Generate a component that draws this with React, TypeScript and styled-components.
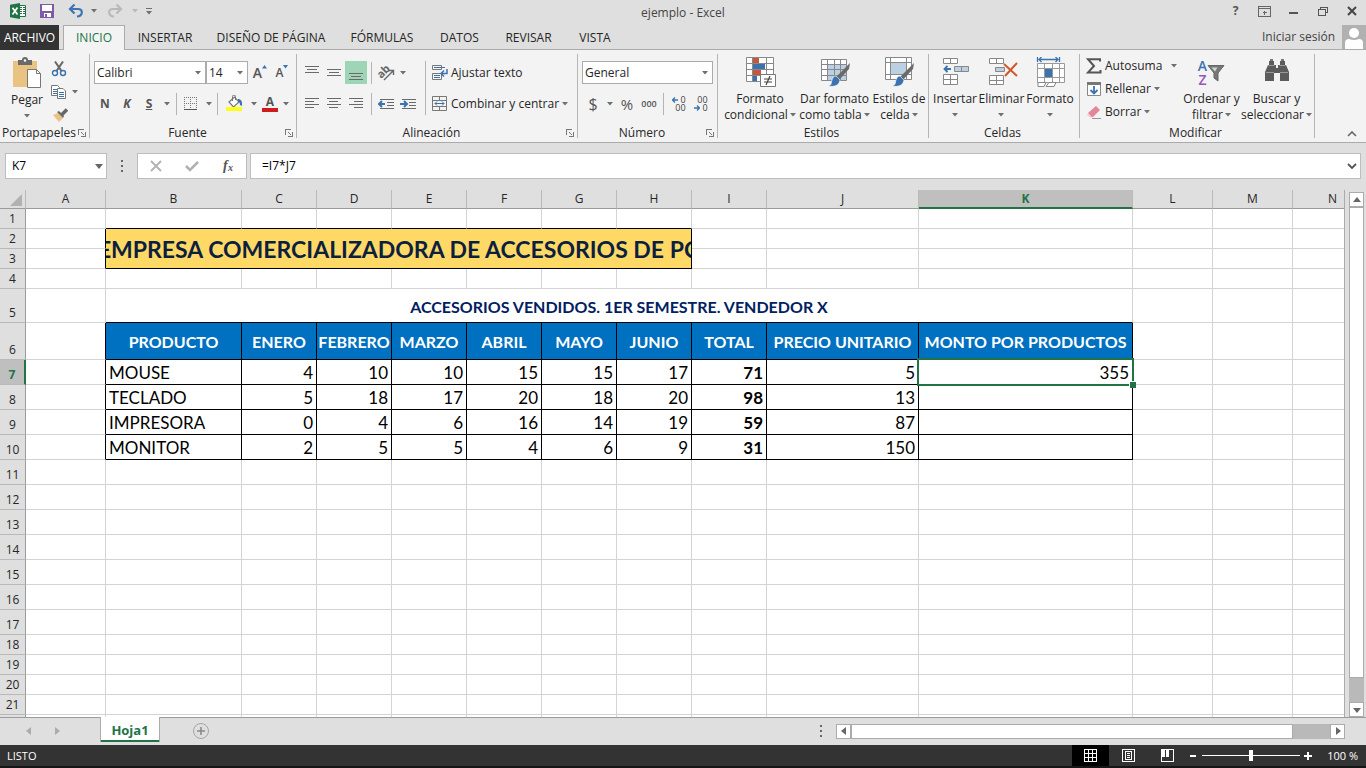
import React from "react";
import styled, { createGlobalStyle, css } from "styled-components";

const GREEN = "#217346";
const INK = "#262626";
const LINE = "#ababab";
const CHROME = "#dfdfdf";
const RIBBON = "#f3f3f3";
const GREY = "#6f6f6f";
const BLUE = "#3b73af";

const Global = createGlobalStyle`
  * { box-sizing: border-box; }
  body { margin: 0; background: ${CHROME}; color: ${INK}; font: 12px/16px "Open Sans", sans-serif; }
  button, input, select { font: inherit; color: inherit; }
  svg { display: block; flex: none; }
`;

const Window = styled.div`
  display: flex;
  flex-direction: column;
  height: 100vh;
  overflow: hidden;
`;

const PlainButton = styled.button`
  display: flex;
  align-items: center;
  justify-content: center;
  padding: 0;
  border: 0;
  background: transparent;
  white-space: nowrap;
`;

/* ---------- Title bar ---------- */

const TitleBar = styled.header`
  display: grid;
  grid-template-columns: 1fr auto 1fr;
  align-items: center;
  height: 25px;
  color: #444;
`;

const QuickAccess = styled.div`
  display: flex;
  align-items: center;
  padding: 0 0 3px 3px;
`;

const WindowButtons = styled.div`
  display: flex;
  justify-content: flex-end;
  padding-bottom: 3px;
`;

const BarButton = styled(PlainButton)<{ $w: number }>`
  width: ${(p) => p.$w}px;
  height: 22px;
`;

const Title = styled.h1`
  margin: 0;
  font-size: 12px;
  font-weight: 400;
`;

/* ---------- Ribbon tabs ---------- */

const TabRow = styled.nav`
  display: flex;
  height: 25px;
  box-shadow: inset 0 -1px 0 ${LINE};
`;

const FileTab = styled(PlainButton)`
  width: 59px;
  margin-right: 4px;
  background: #333;
  color: #fff;
`;

const Tab = styled(PlainButton)<{ $w: number; $active?: boolean }>`
  width: ${(p) => p.$w}px;
  ${(p) =>
    p.$active &&
    css`
      background: ${RIBBON};
      color: ${GREEN};
      border: 1px solid ${LINE};
      border-bottom: 0;
    `}
`;

const Account = styled.a`
  display: flex;
  align-items: center;
  gap: 7px;
  height: 24px;
  margin-left: auto;
  color: #444;
  text-decoration: none;
`;

/* ---------- Ribbon ---------- */

const Ribbon = styled.section`
  display: flex;
  height: 93px;
  padding: 4px 0;
  background: ${RIBBON};
  border-bottom: 1px solid ${LINE};
`;

const Group = styled.div<{ $w: number }>`
  display: flex;
  flex-direction: column;
  width: ${(p) => p.$w}px;
  border-right: 1px solid #b5b5b5;
`;

const GroupBody = styled.div<{ $left?: number; $top?: number }>`
  display: flex;
  flex: 1;
  min-height: 0;
  padding: ${(p) => p.$top ?? 0}px 0 0 ${(p) => p.$left ?? 0}px;
`;

const GroupFooter = styled.div`
  display: flex;
  align-items: center;
  height: 10px;
  padding-right: 3px;
  line-height: 10px;
`;

const GroupName = styled.span`
  flex: 1;
  text-align: center;
  white-space: nowrap;
`;

const Column = styled.div<{ $gap?: number }>`
  display: flex;
  flex-direction: column;
  gap: ${(p) => p.$gap ?? 0}px;
`;

const Line = styled.div<{ $gap?: number; $h?: number }>`
  display: flex;
  align-items: center;
  gap: ${(p) => p.$gap ?? 0}px;
  height: ${(p) => p.$h ?? 23}px;
`;

const Tool = styled(PlainButton)<{ $w: number; $on?: boolean; $left?: boolean }>`
  width: ${(p) => p.$w}px;
  height: 23px;
  gap: 3px;
  justify-content: ${(p) => (p.$left ? "flex-start" : "center")};
  background: ${(p) => (p.$on ? "#9fd5b7" : "transparent")};
`;

const Glyph = styled.span<{ $size?: number; $weight?: number; $italic?: boolean; $line?: boolean }>`
  color: #555;
  font-size: ${(p) => p.$size ?? 12}px;
  font-weight: ${(p) => p.$weight ?? 700};
  font-style: ${(p) => (p.$italic ? "italic" : "normal")};
  text-decoration: ${(p) => (p.$line ? "underline" : "none")};
`;

const Rule = styled.span<{ $h?: number; $gap?: number }>`
  width: 1px;
  height: ${(p) => p.$h ?? 22}px;
  margin: 0 ${(p) => p.$gap ?? 0}px;
  background: #b5b5b5;
`;

const ComboBox = styled.label<{ $w: number }>`
  display: grid;
  align-items: center;
  width: ${(p) => p.$w}px;
  height: 23px;
  background: #fff;
  border: 1px solid ${LINE};
  > * { grid-area: 1 / 1; }
  > svg { justify-self: end; margin-right: 4px; pointer-events: none; }
`;

const Select = styled.select`
  width: 100%;
  height: 100%;
  padding: 0 12px 0 2px;
  border: 0;
  background: transparent;
  appearance: none;
`;

const BigTool = styled(PlainButton)<{ $w: number }>`
  flex-direction: column;
  justify-content: flex-start;
  width: ${(p) => p.$w}px;
  gap: 3px;
`;

const BigLabel = styled.span`
  display: flex;
  flex-direction: column;
  align-items: center;
`;

const BigLabelLine = styled.span`
  display: flex;
  align-items: center;
  gap: 2px;
  height: 16px;
`;

const Collapse = styled(PlainButton)`
  align-self: flex-end;
  width: 16px;
  height: 8px;
  margin: 0 6px 0 auto;
`;

/* ---------- Formula bar ---------- */

const FormulaRow = styled.div`
  display: flex;
  height: 47px;
  padding: 10px 5px 11px;
`;

const Field = styled.label<{ $w?: number }>`
  display: flex;
  align-items: center;
  flex: ${(p) => (p.$w ? "none" : 1)};
  width: ${(p) => (p.$w ? `${p.$w}px` : "auto")};
  padding: 0 3px 0 6px;
  background: #fff;
  border: 1px solid #bdbdbd;
`;

const TextInput = styled.input<{ $indent?: number }>`
  flex: 1;
  min-width: 0;
  padding: 0 0 0 ${(p) => p.$indent ?? 0}px;
  border: 0;
  background: transparent;
  color: #000;
`;

const Grip = styled.span`
  display: flex;
  align-items: center;
  justify-content: center;
  width: 30px;
`;

const FormulaButtons = styled.div`
  display: flex;
  align-items: center;
  width: 110px;
  margin-right: 3px;
  background: #fff;
  border: 1px solid #bdbdbd;
`;

/* ---------- Worksheet ---------- */

const Workspace = styled.main`
  display: flex;
  flex: 1;
  min-height: 0;
`;

const Viewport = styled.div`
  flex: 1;
  min-width: 0;
  overflow: hidden;
  background: linear-gradient(#fff, #fff) 0 19px no-repeat;
  border-right: 1px solid ${LINE};
`;

const Sheet = styled.table`
  width: 100%;
  table-layout: fixed;
  border-collapse: separate;
  border-spacing: 0;
`;

const Col = styled.col<{ $w: number }>`
  width: ${(p) => p.$w}px;
`;

const Row = styled.tr<{ $h: number }>`
  height: ${(p) => p.$h}px;
`;

const ColumnHead = styled.th<{ $active?: boolean }>`
  height: 19px;
  padding: 0;
  font-weight: ${(p) => (p.$active ? 700 : 400)};
  line-height: 16px;
  color: ${(p) => (p.$active ? GREEN : INK)};
  background: ${(p) => (p.$active ? "#bfbfbf" : CHROME)};
  border-right: 1px solid #b9b9b9;
  border-bottom: 1px solid #9b9b9b;
  ${(p) => p.$active && `border-bottom: 2px solid ${GREEN};`}
`;

const Corner = styled.td`
  padding: 2px 0 0 10px;
  background: ${CHROME};
  border-right: 1px solid #b9b9b9;
  border-bottom: 1px solid #9b9b9b;
`;

const RowHead = styled.th<{ $active?: boolean }>`
  padding: 0;
  vertical-align: bottom;
  line-height: 18px;
  font-weight: ${(p) => (p.$active ? 700 : 400)};
  color: ${(p) => (p.$active ? GREEN : INK)};
  background: ${(p) => (p.$active ? "#bfbfbf" : CHROME)};
  border-right: ${(p) => (p.$active ? `2px solid ${GREEN}` : "1px solid #9b9b9b")};
  border-bottom: 1px solid #b9b9b9;
`;

type CellKind = "blank" | "banner" | "caption" | "head" | "text" | "number" | "total";

const Cell = styled.td<{ $kind: CellKind; $right?: boolean; $bottom?: boolean }>`
  padding: 2px 3px 0;
  background: #fff;
  color: #000;
  font: 400 17px/22px Lato, sans-serif;
  white-space: nowrap;
  border-right: 1px solid ${(p) => (p.$right ? "#000" : "#d4d4d4")};
  border-bottom: 1px solid ${(p) => (p.$bottom ? "#000" : "#d4d4d4")};
  text-align: ${(p) => (p.$kind === "number" || p.$kind === "total" ? "right" : p.$kind === "text" ? "left" : "center")};
  ${(p) => p.$kind === "blank" && "padding: 0; line-height: 16px;"}
  ${(p) => p.$kind === "total" && "font-weight: 700;"}
  ${(p) => p.$kind === "head" && "background: #0070c0; color: #fff; font-size: 16px; font-weight: 700; padding: 2px 0 0;"}
  ${(p) => p.$kind === "caption" && "color: #002060; font-size: 16px; font-weight: 700;"}
  ${(p) => p.$kind === "banner" && "background: #ffd966; padding: 0;"}
`;

const Banner = styled.div`
  display: flex;
  justify-content: center;
  overflow: hidden;
  color: #0d1f3f;
  font-size: 23px;
  font-weight: 700;
  line-height: 38px;
`;

const Selected = styled(Cell)`
  position: relative;
  &::before {
    content: "";
    position: absolute;
    inset: -2px;
    border: 2px solid ${GREEN};
  }
  &::after {
    content: "";
    position: absolute;
    right: -4px;
    bottom: -4px;
    width: 6px;
    height: 6px;
    background: ${GREEN};
    border: solid #fff;
    border-width: 1px 0 0 1px;
  }
`;

const VScroll = styled.div`
  display: flex;
  flex-direction: column;
  width: 15px;
  margin: 2px 2px 0 4px;
  background: #b9b9b9;
`;

const ScrollButton = styled(PlainButton)`
  width: 15px;
  height: 15px;
  background: #fff;
  border: 1px solid ${LINE};
`;

const VThumb = styled.div`
  flex: 0 0 471px;
  background: #fff;
  border: 1px solid ${LINE};
`;

const Spacer = styled.div`
  flex: 1;
`;

/* ---------- Sheet tabs and status bar ---------- */

const SheetBar = styled.div`
  display: flex;
  height: 28px;
  padding-right: 21px;
  box-shadow: inset 0 1px 0 #9b9b9b;
`;

const SheetNav = styled.div`
  display: flex;
  align-items: center;
  width: 100px;
  padding-left: 15px;
`;

const SheetTab = styled(PlainButton)`
  width: 60px;
  height: 25px;
  background: #fff;
  color: ${GREEN};
  font-size: 13px;
  font-weight: 700;
  border: solid ${LINE};
  border-width: 0 1px;
  box-shadow: inset 0 -2px 0 ${GREEN};
`;

const AddSheet = styled(PlainButton)`
  width: 82px;
`;

const HScroll = styled.div`
  display: flex;
  align-self: center;
  width: 509px;
  height: 15px;
  background: #b9b9b9;
`;

const HThumb = styled.div`
  width: 442px;
  background: #fff;
  border: 1px solid ${LINE};
`;

const StatusBar = styled.footer`
  display: flex;
  align-items: center;
  height: 23px;
  padding: 0 8px 0 7px;
  background: #333;
  border-bottom: 2px solid #161616;
  color: #fff;
  font-size: 11px;
`;

const ViewButton = styled(PlainButton)<{ $w: number; $on?: boolean }>`
  width: ${(p) => p.$w}px;
  height: 21px;
  background: ${(p) => (p.$on ? "#000" : "transparent")};
`;

const Zoom = styled.input`
  width: 98px;
  height: 12px;
  margin: 0 3px;
  appearance: none;
  background: linear-gradient(#fff, #fff) center / 100% 1px no-repeat;
  &::-webkit-slider-thumb {
    appearance: none;
    width: 4px;
    height: 11px;
    background: #fff;
  }
`;

const ZoomLevel = styled.span`
  width: 46px;
  text-align: right;
`;

/* ---------- Icons ---------- */

type IconProps = { w?: number; h?: number; children: React.ReactNode; smooth?: boolean };
const Icon = ({ w = 16, h = 16, children, smooth }: IconProps) => (
  <svg width={w} height={h} viewBox={`0 0 ${w} ${h}`} fill="none" aria-hidden="true" shapeRendering={smooth ? "auto" : "crispEdges"}>
    {children}
  </svg>
);

const Caret = ({ color = GREY }: { color?: string }) => (
  <Icon w={6} h={4} smooth>
    <path d="M0 0h6L3 3.5z" fill={color} />
  </Icon>
);

const ExcelIcon = () => (
  <Icon smooth>
    <path d="M9 2.5h6.5v11H9z" fill="#fff" stroke={GREEN} />
    <path d="M10 4.5h2M13 4.5h2M10 6.5h2M13 6.5h2M10 8.5h2M13 8.5h2M10 10.5h2M13 10.5h2" stroke={GREEN} strokeWidth="1.2" />
    <path d="M0 1.8 10 0v16L0 14.2z" fill={GREEN} />
    <path d="m2.5 4.7 5 6.8M7.5 4.5l-5 7" stroke="#fff" strokeWidth="1.7" />
  </Icon>
);

const SaveIcon = () => (
  <Icon w={14} h={14}>
    <path d="M0 0h14v14H0z" fill="#7d5ba6" />
    <path d="M2 1h10v6H2zM4 9h7v4H4z" fill="#fff" />
    <path d="M5 10h2v3H5z" fill="#7d5ba6" />
  </Icon>
);

const UndoIcon = ({ redo }: { redo?: boolean }) => (
  <Icon smooth>
    <g transform={redo ? "matrix(-1 0 0 1 16 0)" : undefined} stroke={redo ? "#b9b9b9" : "#3f74b3"} strokeWidth="2.2">
      <path d="M2 6h8c5.5 0 5 7-1 7.5" />
      <path d="M6.5 1.5 2 6l4.500 4.500" />
    </g>
  </Icon>
);

const PasteIcon = () => (
  <Icon w={32} h={32} smooth>
    <path d="M2 4h24v26H2z" fill="#eac282" />
    <path d="M7 3h4a3 3 0 0 1 6 0h4v5H7z" fill="#6a6a6a" />
    <circle cx="14" cy="3.5" r="1.2" fill="#fff" />
    <path d="M16.500 12.500h9l4 4v14h-13z" fill="#fff" stroke="#777" />
    <path d="M25.500 12.500v4h4" stroke="#777" />
  </Icon>
);

const CutIcon = () => (
  <Icon smooth>
    <path d="M4 .5 10.500 10M12 .5 5.500 10" stroke="#666" strokeWidth="2" />
    <circle cx="4" cy="12" r="2.5" stroke={BLUE} strokeWidth="1.4" />
    <circle cx="12" cy="12" r="2.5" stroke={BLUE} strokeWidth="1.4" />
  </Icon>
);

const CopyIcon = () => (
  <Icon smooth>
    <path d="M.5 1.500h6l2 2v8h-8z" fill="#fff" stroke="#777" />
    <path d="M2 5.500h4M2 7.500h4M2 9.500h4" stroke={BLUE} />
    <path d="M6.500 4.500h5.500l2.500 2.500v7.500h-8z" fill="#fff" stroke="#777" />
    <path d="M8 8.500h5M8 10.500h5M8 12.500h5" stroke={BLUE} />
  </Icon>
);

const PainterIcon = () => (
  <Icon smooth>
    <path d="m1 8 5-2 5 5-4 4z" fill="#eac282" />
    <path d="m5 5 2-1 5 5-1 2z" fill="#666" />
    <path d="M10 7.500 15 2.500" stroke="#666" strokeWidth="3.5" />
  </Icon>
);

const BordersIcon = () => (
  <Icon w={14} h={14}>
    <path d="M.5 0v13M6.500 0v13M12.500 0v13M0 .5h13M0 6.500h13" stroke="#777" strokeDasharray="1 1" />
    <path d="M0 12.500h13" stroke="#555" />
  </Icon>
);

const FillIcon = () => (
  <Icon w={17} h={17} smooth>
    <path d="m3 7 5.500-5 4.500 5-5.500 5z" fill="#fff" stroke="#777" strokeWidth="1.2" />
    <path d="M6.500 6V1.500a1.500 1.500 0 0 1 3 0V5" stroke="#777" />
    <path d="M12 4c3 0 4.500 2 4 7l-2-1c0-2-.5-3-2-3z" fill={BLUE} />
    <path d="M0 12h16v4H0z" fill="#ffff1a" />
  </Icon>
);

const FontColor = styled.span`
  width: 16px;
  height: 17px;
  border-bottom: 4px solid #cf1b1b;
  color: #555;
  font-weight: 700;
  line-height: 13px;
`;

const SizeMark = styled.span<{ $small?: boolean }>`
  display: flex;
  align-items: flex-start;
  color: #555;
  font-size: ${(p) => (p.$small ? 12 : 14)}px;
  font-weight: 600;
`;

type BarSpec = [number, number];
const Bars = ({ bars, y = 0 }: { bars: BarSpec[]; y?: number }) => (
  <Icon>
    {bars.map(([x, w], i) => (
      <path key={i} d={`M${x} ${y + i * 3 + 0.5}h${w}`} stroke="#6a6a6a" />
    ))}
  </Icon>
);

const IndentIcon = ({ inward }: { inward?: boolean }) => (
  <Icon>
    <path d="M2 3.500h14M9 6.500h7M9 9.500h7M2 12.500h14" stroke="#6a6a6a" />
    <path d={inward ? "M0 8h6M4 5l3 3-3 3" : "M7 8H1M4 5 1 8l3 3"} stroke={BLUE} strokeWidth="2" shapeRendering="auto" />
  </Icon>
);

const AngleIcon = () => (
  <Icon w={18} h={18} smooth>
    <g transform="rotate(-45 7 8)">
      <text x="0" y="11" fontSize="11" fontWeight="700" fill="#666">ab</text>
    </g>
    <path d="m7 16 9-9M12 6.500h4.500V11" stroke="#666" strokeWidth="1.4" />
  </Icon>
);

const WrapIcon = () => (
  <Icon smooth>
    <path d="M.5.5h9v4h-9zM.5 8.500h9v6h-9z" stroke="#777" />
    <path d="M2 2.500h11M2 10.500h6M2 12.500h6" stroke={BLUE} />
    <path d="M15 4v4.500H9M12 5.500l-3 3 3 3" stroke={BLUE} strokeWidth="1.5" />
  </Icon>
);

const MergeIcon = () => (
  <Icon smooth>
    <path d="M.5.5h14v14H.5zM.5 4.500h14M.5 10.500h14M7.500.5v4M7.500 10.500v4" stroke="#777" />
    <path d="M3 7.500h9M5 5.500l-2 2 2 2M10 5.500l2 2-2 2" stroke={BLUE} />
  </Icon>
);

const Zeros = styled.span<{ $less?: boolean }>`
  display: flex;
  flex-direction: column;
  align-items: ${(p) => (p.$less ? "flex-end" : "flex-end")};
  color: #444;
  font-size: 9px;
  line-height: 8px;
`;

const ZeroLine = styled.span`
  display: flex;
  align-items: center;
  gap: 2px;
`;

const DecimalIcon = ({ less }: { less?: boolean }) => {
  const arrow = (
    <Icon w={6} h={6} smooth>
      <path d={less ? "M0 3h5M3 .5 5.500 3 3 5.500" : "M6 3H1M3 .5.5 3 3 5.500"} stroke={BLUE} strokeWidth="1.3" />
    </Icon>
  );
  return (
    <Zeros>
      <ZeroLine>{less ? "00" : <>{arrow}0</>}</ZeroLine>
      <ZeroLine>{less ? <>{arrow}0</> : "00"}</ZeroLine>
    </Zeros>
  );
};

const ConditionalIcon = () => (
  <Icon w={32} h={31} smooth>
    <path d="M2.500.5h27v24h-27z" fill="#fff" />
    <path d="M9 0h6v6H9zM9 12h8v6H9z" fill="#c4573c" />
    <path d="M9 6h12v6H9zM9 18h4v6H9z" fill={BLUE} />
    <path d="M2.500.5h27v24h-27zM2 6.500h27M2 12.500h27M2 18.500h27M8.500 0v24M22.500 0v24" stroke="#888" />
    <path d="M16.500 17.500h15v12h-15z" fill="#fff" stroke="#777" />
    <path d="M20 22h8M20 25h8M26 19l-4 9" stroke="#444" strokeWidth="1.2" />
  </Icon>
);

const Brush = () => (
  <>
    <path d="m31 6-1 6-10 11-3-3z" fill="#6a6a6a" />
    <path d="m17 19 4 4c-1 6-6 7-12 6 4-1 3-3 4-6 1-3 2-4 4-4z" fill={BLUE} stroke="#fff" strokeWidth=".6" />
  </>
);

const TableFormatIcon = () => (
  <Icon w={32} h={31} smooth>
    <path d="M2.500 2.500h25v21h-25z" fill="#fff" />
    <path d="M9 8h18v15H9z" fill="#bcd0e4" />
    <path d="M2.500 2.500h25v21h-25zM2 7.500h25M2 12.500h25M2 18.500h25M8.500 2v21M15.500 2v21M21.500 2v21" stroke="#888" />
    <Brush />
  </Icon>
);

const CellStyleIcon = () => (
  <Icon w={32} h={31} smooth>
    <path d="M2.500.5h26v22h-26z" fill="#fff" />
    <path d="M8 6h15v11H8z" fill="#bcd0e4" />
    <path d="M2.500.5h26v22h-26zM2 5.500h26M2 17.500h26M7.500 0v22M23.500 0v22" stroke="#888" />
    <Brush />
  </Icon>
);

const InsertIcon = () => (
  <Icon w={32} h={31} smooth>
    <path d="M4.500 1.500h14v5h-14zM11.500 1.500v5M4.500 17.500h14v10h-14zM11.500 17.500v10M4.500 22.500h14" fill="#fff" stroke="#888" />
    <path d="M15.500 9.500h14v5h-14zM22.500 9.500v5" fill="#bcd0e4" stroke="#888" />
    <path d="M12 12H6M8.500 9 5.500 12l3 3" stroke={BLUE} strokeWidth="1.8" />
  </Icon>
);

const DeleteIcon = () => (
  <Icon w={32} h={31} smooth>
    <path d="M3.500 1.500h14v5h-14zM10.500 1.500v5M3.500 18.500h14v9h-14zM10.500 18.500v9M3.500 23.500h14" fill="#fff" stroke="#888" />
    <path d="M9.500 10.500h9v4h-9z" fill="#bcd0e4" stroke="#888" />
    <path d="m18 7 13 12M31 6 19 19" stroke="#d0582f" strokeWidth="2" />
  </Icon>
);

const FormatIcon = () => (
  <Icon w={32} h={31} smooth>
    <path d="M3.500 6.500h27v19h-27z" fill="#fff" />
    <path d="M11 12h7v8h-7z" fill={BLUE} />
    <path d="M3.500 6.500h27v19h-27zM3 11.500h27M3 20.500h27M10.500 6v19M18.500 6v19M25.500 6v19" stroke="#999" />
    <path d="M4 25.500h8l-2 4H4zM12 29.500l3-4h7l-2 4z" fill="#fff" stroke="#888" />
    <path d="M3.500 0v5M25.500 0v5M5 2.500h19M7.500 0 5 2.500 7.500 5M21.500 0 24 2.500 21.500 5" stroke={BLUE} strokeWidth="1.3" />
  </Icon>
);

const SigmaIcon = () => (
  <Icon smooth>
    <path d="M14 3.500V1.200H2L8 8l-6 6.500h12.500V12" stroke="#555" strokeWidth="2" />
  </Icon>
);

const FillDownIcon = () => (
  <Icon smooth>
    <path d="M1.500 1.500h13v13h-13z" fill="#fff" stroke="#888" />
    <path d="M1 1h14v3H1z" fill="#777" />
    <path d="M8 5v7M4.500 9 8 12.500 11.500 9" stroke={BLUE} strokeWidth="1.8" />
  </Icon>
);

const EraserIcon = () => (
  <Icon smooth>
    <path d="M2 9 10 2l4 4-7 7H4z" fill="#e5849a" />
    <path d="m2 9 4 4-1 1-4-3z" fill="#f7cdd6" />
    <path d="M6 14.500h9" stroke="#999" />
  </Icon>
);

const SortDrawing = styled.span`
  display: flex;
  align-items: center;
  height: 31px;
`;

const SortLetters = styled.span`
  display: flex;
  flex-direction: column;
  color: ${BLUE};
  font-size: 14px;
  font-weight: 600;
  line-height: 14px;
`;

const Purple = styled.span`
  color: #9455bd;
`;

const SortIcon = () => (
  <SortDrawing>
    <SortLetters>A<Purple>Z</Purple></SortLetters>
    <Icon w={18} h={18} smooth>
      <path d="M1 1.500h16L11 9v8l-4-3V9z" fill="#777" stroke="#666" />
      <path d="M4.500 3.500h6l-2.500 4z" fill="#d5d5d5" />
    </Icon>
  </SortDrawing>
);

const FindIcon = () => (
  <Icon w={32} h={31} smooth>
    <path d="M8 4h5v4h2v3h2V8h2V4h5v4h1l3 7v9h-9v-8h-6v8H4v-9l3-7h1z" fill="#5c5c5c" />
    <path d="M7.500 8.500h6M18.500 8.500h6M5 15.500h8M19 15.500h8" stroke="#999" />
    <path d="M9 2h3v2H9zM20 2h3v2h-3z" fill="#777" />
  </Icon>
);

const LauncherIcon = () => (
  <Icon w={8} h={8}>
    <path d="M.5 6V.5H6" stroke="#777" />
    <path d="m3 3 3 3M7.500 3v4.500H3" stroke="#777" />
  </Icon>
);

const Arrow = ({ dir, color = "#666" }: { dir: "up" | "down" | "left" | "right"; color?: string }) => {
  const shapes = { up: "M0 6h8L4 1z", down: "M0 2h8L4 7z", left: "M6 0v8L1 4z", right: "M2 0v8l5-4z" };
  return (
    <Icon w={8} h={8} smooth>
      <path d={shapes[dir]} fill={color} />
    </Icon>
  );
};

const Dots = () => (
  <Icon w={2} h={12}>
    <path d="M0 1h2M0 6h2M0 11h2" stroke="#666" strokeWidth="2" />
  </Icon>
);

/* ---------- Ribbon parts ---------- */

const Footer = ({ name, launcher }: { name: string; launcher?: boolean }) => (
  <GroupFooter>
    <GroupName>{name}</GroupName>
    {launcher && (
      <PlainButton aria-label={`Opciones de ${name}`}>
        <LauncherIcon />
      </PlainButton>
    )}
  </GroupFooter>
);

type BigProps = { w: number; icon: React.ReactNode; first: string; second?: string };
const Big = ({ w, icon, first, second }: BigProps) => (
  <BigTool $w={w}>
    {icon}
    <BigLabel>
      <BigLabelLine>{first}</BigLabelLine>
      <BigLabelLine>
        {second}
        <Caret />
      </BigLabelLine>
    </BigLabel>
  </BigTool>
);

const Combo = ({ w, label, value }: { w: number; label: string; value: string }) => (
  <ComboBox $w={w}>
    <Select aria-label={label} defaultValue={value}>
      <option>{value}</option>
    </Select>
    <Caret />
  </ComboBox>
);

const Drop = ({ label, w = 16 }: { label: string; w?: number }) => (
  <Tool $w={w} aria-label={label}>
    <Caret />
  </Tool>
);

const RibbonPanel = () => (
  <Ribbon>
    <Group $w={90}>
      <GroupBody $left={5} $top={3}>
        <BigTool $w={44}>
          <PasteIcon />
          <BigLabel>
            <BigLabelLine>Pegar</BigLabelLine>
            <BigLabelLine><Caret /></BigLabelLine>
          </BigLabel>
        </BigTool>
        <Column>
          <Tool $w={20} aria-label="Cortar"><CutIcon /></Tool>
          <Line>
            <Tool $w={20} aria-label="Copiar"><CopyIcon /></Tool>
            <Drop label="Opciones de copiar" w={12} />
          </Line>
          <Tool $w={22} aria-label="Copiar formato"><PainterIcon /></Tool>
        </Column>
      </GroupBody>
      <Footer name="Portapapeles" launcher />
    </Group>

    <Group $w={207}>
      <GroupBody $left={4} $top={7}>
        <Column $gap={8}>
          <Line>
            <Combo w={112} label="Fuente" value="Calibri" />
            <Combo w={42} label="Tamaño de fuente" value="14" />
            <Tool $w={24} aria-label="Aumentar tamaño">
              <SizeMark>A<Icon w={5} h={4} smooth><path d="M0 3.500h5L2.500 0z" fill={BLUE} /></Icon></SizeMark>
            </Tool>
            <Tool $w={20} aria-label="Disminuir tamaño">
              <SizeMark $small>A<Icon w={5} h={4} smooth><path d="M0 0h5L2.500 3.500z" fill={BLUE} /></Icon></SizeMark>
            </Tool>
          </Line>
          <Line>
            <Tool $w={22}><Glyph>N</Glyph></Tool>
            <Tool $w={22}><Glyph $italic>K</Glyph></Tool>
            <Tool $w={22}><Glyph $line>S</Glyph></Tool>
            <Drop label="Subrayado" w={14} />
            <Rule $gap={2} />
            <Tool $w={24} aria-label="Bordes"><BordersIcon /></Tool>
            <Drop label="Opciones de bordes" w={12} />
            <Rule $gap={2} />
            <Tool $w={28} aria-label="Color de relleno"><FillIcon /></Tool>
            <Drop label="Opciones de relleno" w={12} />
            <Tool $w={20} aria-label="Color de fuente"><FontColor>A</FontColor></Tool>
            <Drop label="Opciones de color" w={12} />
          </Line>
        </Column>
      </GroupBody>
      <Footer name="Fuente" launcher />
    </Group>

    <Group $w={281}>
      <GroupBody $left={4} $top={7}>
        <Column $gap={8}>
          <Line>
            <Tool $w={22} aria-label="Alinear arriba"><Bars y={1} bars={[[1, 14], [3, 10], [1, 14]]} /></Tool>
            <Tool $w={22} aria-label="Alinear al medio"><Bars y={4} bars={[[1, 14], [3, 10], [1, 14]]} /></Tool>
            <Tool $w={22} $on aria-label="Alinear abajo"><Bars y={8} bars={[[1, 14], [3, 10], [1, 14]]} /></Tool>
            <Tool $w={8} as="span"><Rule /></Tool>
            <Tool $w={22} aria-label="Orientación"><AngleIcon /></Tool>
            <Drop label="Opciones de orientación" w={12} />
          </Line>
          <Line>
            <Tool $w={22} aria-label="Alinear a la izquierda"><Bars y={2} bars={[[1, 14], [1, 9], [1, 14], [1, 9]]} /></Tool>
            <Tool $w={22} aria-label="Centrar"><Bars y={2} bars={[[1, 14], [3, 9], [1, 14], [3, 9]]} /></Tool>
            <Tool $w={22} aria-label="Alinear a la derecha"><Bars y={2} bars={[[1, 14], [6, 9], [1, 14], [6, 9]]} /></Tool>
            <Tool $w={8} as="span"><Rule /></Tool>
            <Tool $w={22} aria-label="Disminuir sangría"><IndentIcon /></Tool>
            <Tool $w={22} aria-label="Aumentar sangría"><IndentIcon inward /></Tool>
          </Line>
        </Column>
        <Line $h={54}><Tool $w={13} as="span"><Rule $h={54} /></Tool></Line>
        <Column $gap={8}>
          <Tool $w={104} $left><WrapIcon />Ajustar texto</Tool>
          <Line>
            <Tool $w={126} $left><MergeIcon />Combinar y centrar</Tool>
            <Drop label="Opciones de combinar" w={14} />
          </Line>
        </Column>
      </GroupBody>
      <Footer name="Alineación" launcher />
    </Group>

    <Group $w={140}>
      <GroupBody $left={4} $top={7}>
        <Column $gap={8}>
          <Combo w={131} label="Formato de número" value="General" />
          <Line>
            <Tool $w={22}><Glyph $size={16} $weight={400}>$</Glyph></Tool>
            <Drop label="Formatos de moneda" w={12} />
            <Tool $w={22}><Glyph $size={15} $weight={400}>%</Glyph></Tool>
            <Tool $w={22}><Glyph $size={9} $weight={600}>000</Glyph></Tool>
            <Rule $gap={3} />
            <Tool $w={24} aria-label="Aumentar decimales"><DecimalIcon /></Tool>
            <Tool $w={20} aria-label="Disminuir decimales"><DecimalIcon less /></Tool>
          </Line>
        </Column>
      </GroupBody>
      <Footer name="Número" launcher />
    </Group>

    <Group $w={211}>
      <GroupBody $left={4} $top={3}>
        <Big w={76} icon={<ConditionalIcon />} first="Formato" second="condicional" />
        <Big w={73} icon={<TableFormatIcon />} first="Dar formato" second="como tabla" />
        <Big w={56} icon={<CellStyleIcon />} first="Estilos de" second="celda" />
      </GroupBody>
      <Footer name="Estilos" />
    </Group>

    <Group $w={151}>
      <GroupBody $left={3} $top={3}>
        <Big w={46} icon={<InsertIcon />} first="Insertar" />
        <Big w={47} icon={<DeleteIcon />} first="Eliminar" />
        <Big w={50} icon={<FormatIcon />} first="Formato" />
      </GroupBody>
      <Footer name="Celdas" />
    </Group>

    <Group $w={235}>
      <GroupBody $left={6}>
        <Column>
          <Line>
            <Tool $w={80} $left><SigmaIcon />Autosuma</Tool>
            <Drop label="Opciones de autosuma" />
          </Line>
          <Tool $w={72} $left><FillDownIcon />Rellenar<Caret /></Tool>
          <Tool $w={72} $left><EraserIcon />Borrar<Caret /></Tool>
        </Column>
        <GroupBody $left={1} $top={3}>
          <Big w={57} icon={<SortIcon />} first="Ordenar y" second="filtrar" />
          <Big w={73} icon={<FindIcon />} first="Buscar y" second="seleccionar" />
        </GroupBody>
      </GroupBody>
      <Footer name="Modificar" />
    </Group>

    <Collapse aria-label="Contraer la cinta de opciones">
      <Icon w={10} h={6} smooth><path d="m1 5 4-4 4 4" stroke="#666" strokeWidth="1.6" /></Icon>
    </Collapse>
  </Ribbon>
);

/* ---------- Worksheet data ---------- */

const columns: [string, number][] = [
  ["A", 80], ["B", 136], ["C", 75], ["D", 75], ["E", 75], ["F", 75], ["G", 75], ["H", 75],
  ["I", 75], ["J", 152], ["K", 214], ["L", 80], ["M", 80], ["N", 80],
];

const headings = ["PRODUCTO", "ENERO", "FEBRERO", "MARZO", "ABRIL", "MAYO", "JUNIO", "TOTAL", "PRECIO UNITARIO", "MONTO POR PRODUCTOS"];

const sales: [string, ...number[]][] = [
  ["MOUSE", 4, 10, 10, 15, 15, 17, 71, 5],
  ["TECLADO", 5, 18, 17, 20, 18, 20, 98, 13],
  ["IMPRESORA", 0, 4, 6, 16, 14, 19, 59, 87],
  ["MONITOR", 2, 5, 5, 4, 6, 9, 31, 150],
];

const blanks = (n: number, from = 0, bottom = false) =>
  Array.from({ length: n }, (_, i) => <Cell key={`b${from + i}`} $kind="blank" $bottom={bottom} />);

const emptyRows: [string, number][] = [
  ["11", 25], ["12", 25], ["13", 25], ["14", 25], ["15", 25], ["16", 25], ["17", 25],
  ["18", 20], ["19", 20], ["20", 20], ["21", 20], ["", 20],
];

const Worksheet = () => (
  <Sheet>
    <colgroup>
      <Col $w={26} />
      {columns.map(([name, w]) => <Col key={name} $w={w} />)}
    </colgroup>
    <thead>
      <Row $h={19}>
        <Corner>
          <Icon w={13} h={13} smooth><path d="M12 0v12H0z" fill="#b1b1b1" /></Icon>
        </Corner>
        {columns.map(([name]) => <ColumnHead key={name} scope="col" $active={name === "K"}>{name}</ColumnHead>)}
      </Row>
    </thead>
    <tbody>
      <Row $h={20}>
        <RowHead scope="row">1</RowHead>
        {blanks(1)}
        {blanks(7, 1, true)}
        {blanks(6, 8)}
      </Row>
      <Row $h={20}>
        <RowHead scope="row">2</RowHead>
        <Cell $kind="blank" $right />
        <Cell $kind="banner" $right $bottom colSpan={7} rowSpan={2}>
          <Banner>EMPRESA COMERCIALIZADORA DE ACCESORIOS DE PC</Banner>
        </Cell>
        {blanks(6)}
      </Row>
      <Row $h={20}>
        <RowHead scope="row">3</RowHead>
        <Cell $kind="blank" $right />
        {blanks(6)}
      </Row>
      <Row $h={20}>
        <RowHead scope="row">4</RowHead>
        {blanks(14)}
      </Row>
      <Row $h={34}>
        <RowHead scope="row">5</RowHead>
        <Cell $kind="blank" />
        <Cell $kind="caption" $bottom colSpan={10}>ACCESORIOS VENDIDOS. 1ER SEMESTRE. VENDEDOR X</Cell>
        {blanks(3)}
      </Row>
      <Row $h={37}>
        <RowHead scope="row">6</RowHead>
        <Cell $kind="blank" $right />
        {headings.map((text) => <Cell key={text} $kind="head" $right $bottom>{text}</Cell>)}
        {blanks(3)}
      </Row>
      {sales.map(([product, ...values], r) => (
        <Row key={product} $h={25}>
          <RowHead scope="row" $active={r === 0}>{r + 7}</RowHead>
          <Cell $kind="blank" $right />
          <Cell $kind="text" $right $bottom>{product}</Cell>
          {values.map((value, i) => (
            <Cell key={i} $kind={i === 6 ? "total" : "number"} $right $bottom>{value}</Cell>
          ))}
          {r === 0 ? <Selected $kind="number" $right $bottom>355</Selected> : <Cell $kind="number" $right $bottom />}
          {blanks(3)}
        </Row>
      ))}
      {emptyRows.map(([name, h]) => (
        <Row key={name || "next"} $h={h}>
          <RowHead scope="row">{name}</RowHead>
          {blanks(14)}
        </Row>
      ))}
    </tbody>
  </Sheet>
);

export default function App() {
  return (
    <Window>
      <Global />
      <TitleBar>
        <QuickAccess>
          <BarButton $w={30} aria-label="Excel"><ExcelIcon /></BarButton>
          <BarButton $w={28} aria-label="Guardar"><SaveIcon /></BarButton>
          <BarButton $w={30} aria-label="Deshacer"><UndoIcon /></BarButton>
          <BarButton $w={6} aria-label="Opciones de deshacer"><Caret /></BarButton>
          <BarButton $w={36} aria-label="Rehacer"><UndoIcon redo /></BarButton>
          <BarButton $w={4} aria-label="Opciones de rehacer"><Caret color="#b9b9b9" /></BarButton>
          <BarButton $w={24} aria-label="Personalizar barra">
            <Icon w={6} h={7} smooth><path d="M0 .5h6" stroke={GREY} /><path d="M0 3h6L3 6.500z" fill={GREY} /></Icon>
          </BarButton>
        </QuickAccess>
        <Title>ejemplo - Excel</Title>
        <WindowButtons>
          <BarButton $w={29}><Glyph>?</Glyph></BarButton>
          <BarButton $w={29} aria-label="Presentación de la cinta">
            <Icon w={13} h={11}><path d="M.5.5h12v10H.5zM0 2.500h12M6.500 9V5M4.500 6.500h4" stroke="#666" /></Icon>
          </BarButton>
          <BarButton $w={29} aria-label="Minimizar">
            <Icon w={9} h={9}><path d="M0 6h9" stroke="#555" strokeWidth="2" /></Icon>
          </BarButton>
          <BarButton $w={29} aria-label="Restaurar">
            <Icon w={10} h={9}><path d="M2.500 2V.5h7v5H8M.5 2.500h7v6h-7z" stroke="#555" /></Icon>
          </BarButton>
          <BarButton $w={29} aria-label="Cerrar">
            <Icon w={10} h={10} smooth><path d="m1 1 8 8M9 1 1 9" stroke="#444" strokeWidth="2" /></Icon>
          </BarButton>
        </WindowButtons>
      </TitleBar>

      <TabRow>
        <FileTab>ARCHIVO</FileTab>
        <Tab $w={62} $active>INICIO</Tab>
        <Tab $w={80}>INSERTAR</Tab>
        <Tab $w={132}>DISEÑO DE PÁGINA</Tab>
        <Tab $w={90}>FÓRMULAS</Tab>
        <Tab $w={65}>DATOS</Tab>
        <Tab $w={73}>REVISAR</Tab>
        <Tab $w={60}>VISTA</Tab>
        <Account href="#">
          Iniciar sesión
          <Icon w={24} h={24} smooth>
            <path d="M0 0h24v24H0z" fill="#b1b1b1" />
            <circle cx="12" cy="8" r="5" fill="#fff" />
            <path d="M3 24v-6q0-4 4-4 5 2 10 0 4 0 4 4v6z" fill="#fff" />
          </Icon>
        </Account>
      </TabRow>

      <RibbonPanel />

      <FormulaRow>
        <Field $w={102}>
          <TextInput aria-label="Cuadro de nombres" defaultValue="K7" />
          <Arrow dir="down" />
        </Field>
        <Grip><Dots /></Grip>
        <FormulaButtons>
          <BarButton $w={36} aria-label="Cancelar">
            <Icon w={12} h={12} smooth><path d="m1 1 10 10M11 1 1 11" stroke="#b1b1b1" strokeWidth="1.8" /></Icon>
          </BarButton>
          <BarButton $w={36} aria-label="Introducir">
            <Icon w={14} h={11} smooth><path d="m1 5 4 4 8-8" stroke="#b1b1b1" strokeWidth="2.5" /></Icon>
          </BarButton>
          <BarButton $w={36} aria-label="Insertar función">
            <Icon w={14} h={16} smooth>
              <g fontFamily="Liberation Serif, serif" fontStyle="italic" fontWeight="700" fill="#555">
                <text x="2" y="12" fontSize="14">f</text>
                <text x="7" y="13" fontSize="10">x</text>
              </g>
            </Icon>
          </BarButton>
        </FormulaButtons>
        <Field>
          <TextInput aria-label="Barra de fórmulas" $indent={5} defaultValue="=I7*J7" />
          <Icon w={10} h={6} smooth><path d="m1 1 4 4 4-4" stroke="#555" strokeWidth="1.8" /></Icon>
        </Field>
      </FormulaRow>

      <Workspace>
        <Viewport><Worksheet /></Viewport>
        <VScroll>
          <ScrollButton aria-label="Desplazar arriba"><Arrow dir="up" /></ScrollButton>
          <VThumb />
          <Spacer />
          <ScrollButton aria-label="Desplazar abajo"><Arrow dir="down" /></ScrollButton>
        </VScroll>
      </Workspace>

      <SheetBar>
        <SheetNav>
          <BarButton $w={28} aria-label="Hoja anterior"><Arrow dir="left" color={LINE} /></BarButton>
          <BarButton $w={28} aria-label="Hoja siguiente"><Arrow dir="right" color={LINE} /></BarButton>
        </SheetNav>
        <SheetTab>Hoja1</SheetTab>
        <AddSheet aria-label="Hoja nueva">
          <Icon w={16} h={16} smooth>
            <circle cx="8" cy="8" r="7.5" stroke="#a5a5a5" />
            <path d="M8 4v8M4 8h8" stroke="#8a8a8a" strokeWidth="1.6" />
          </Icon>
        </AddSheet>
        <Spacer />
        <Grip><Dots /></Grip>
        <HScroll>
          <ScrollButton aria-label="Desplazar a la izquierda"><Arrow dir="left" /></ScrollButton>
          <HThumb />
          <Spacer />
          <ScrollButton aria-label="Desplazar a la derecha"><Arrow dir="right" /></ScrollButton>
        </HScroll>
      </SheetBar>

      <StatusBar>
        LISTO
        <Spacer />
        <ViewButton $w={37} $on aria-label="Normal">
          <Icon w={13} h={13}><path d="M.5.5h12v12H.5zM4.500 0v12M8.500 0v12M0 4.500h12M0 8.500h12" stroke="#fff" /></Icon>
        </ViewButton>
        <ViewButton $w={39} aria-label="Diseño de página">
          <Icon w={13} h={13}><path d="M.5.5h12v12H.5zM3.500 2.500h6v8h-6zM5 4.500h3M5 6.500h3M5 8.500h3" stroke="#fff" /></Icon>
        </ViewButton>
        <ViewButton $w={38} aria-label="Ver salto de página">
          <Icon w={13} h={13}><path d="M.5.5h12v12H.5z" stroke="#fff" /><path d="M1 1h3v7H1zM5 1h3v7H5z" fill="#fff" /></Icon>
        </ViewButton>
        <BarButton $w={13} aria-label="Alejar"><Icon w={6} h={8}><path d="M0 4h6" stroke="#fff" strokeWidth="2" /></Icon></BarButton>
        <Zoom type="range" aria-label="Zoom" min={10} max={190} defaultValue={100} />
        <BarButton $w={9} aria-label="Acercar"><Icon w={8} h={8}><path d="M0 4h8M4 0v8" stroke="#fff" strokeWidth="2" /></Icon></BarButton>
        <ZoomLevel>100 %</ZoomLevel>
      </StatusBar>
    </Window>
  );
}
